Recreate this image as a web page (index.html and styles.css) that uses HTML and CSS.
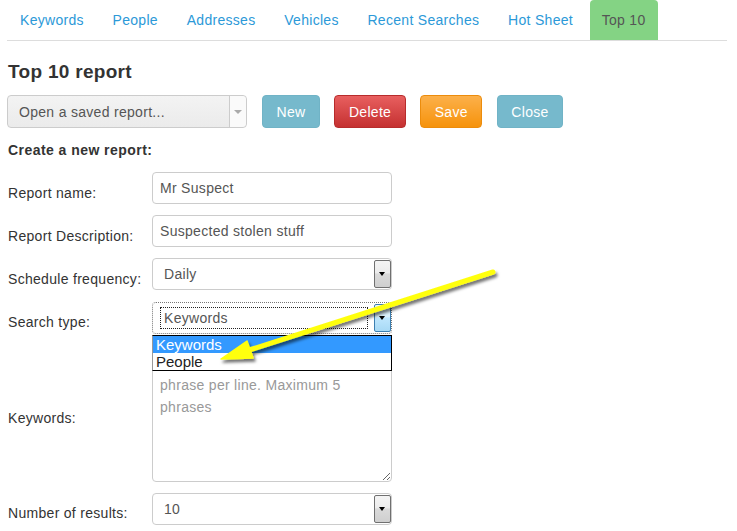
FILE: index.html
```html
<!DOCTYPE html>
<html lang="en">
  <head>
    <meta charset="UTF-8" />
    <meta name="viewport" content="width=device-width, initial-scale=1.0" />
    <title>Top 10 report</title>
    <link rel="stylesheet" href="styles.css">
  </head>
  <body>
    <div class="page">
      <ul class="tabs">
        <li class="tab"><a href="#">Keywords</a></li>
        <li class="tab"><a href="#">People</a></li>
        <li class="tab"><a href="#">Addresses</a></li>
        <li class="tab"><a href="#">Vehicles</a></li>
        <li class="tab"><a href="#">Recent Searches</a></li>
        <li class="tab"><a href="#">Hot Sheet</a></li>
        <li class="tab active"><a href="#">Top 10</a></li>
      </ul>

      <h1 class="title">Top 10 report</h1>

      <div class="toolbar">
        <div class="saved">
          <span class="saved-text">Open a saved report...</span>
          <span class="saved-arrow"></span>
        </div>
        <button class="btn btn-info first">New</button>
        <button class="btn btn-danger">Delete</button>
        <button class="btn btn-warning">Save</button>
        <button class="btn btn-info">Close</button>
      </div>

      <h2 class="section">Create a new report:</h2>

      <div class="form">
        <label class="label">Report name:</label>
        <input class="field" type="text" value="Mr Suspect" />

        <label class="label">Report Description:</label>
        <input class="field" type="text" value="Suspected stolen stuff" />

        <label class="label">Schedule frequency:</label>
        <div class="select">
          <span class="select-text">Daily</span>
          <span class="select-btn"></span>
        </div>

        <label class="label">Search type:</label>
        <div class="select focus">
          <span class="focus-text">Keywords</span>
          <span class="select-btn hover"></span>
          <!-- opened dropdown list -->
          <ul class="options">
            <li class="option selected">Keywords</li>
            <li class="option">People</li>
          </ul>
        </div>

        <label class="label">Keywords:</label>
        <textarea class="area" placeholder="Enter one keyword or&#10;phrase per line. Maximum 5&#10;phrases"></textarea>

        <label class="label">Number of results:</label>
        <div class="select">
          <span class="select-text">10</span>
          <span class="select-btn"></span>
        </div>
      </div>

      <!-- yellow annotation arrow drawn over the page -->
      <svg class="annotation" width="737" height="531" viewBox="0 0 737 531">
        <defs>
          <filter id="shadow" x="-10%" y="-30%" width="120%" height="160%">
            <feDropShadow dx="2" dy="3" stdDeviation="1.6" flood-color="#000" flood-opacity="0.55" />
          </filter>
        </defs>
        <g filter="url(#shadow)">
          <line x1="493" y1="272" x2="246" y2="351" stroke="#ffff10" stroke-width="5" stroke-linecap="round" />
          <polygon points="221,359 247,341 253,358" fill="#ffff10" stroke="#ffff10" stroke-width="1.5" stroke-linejoin="round" />
        </g>
      </svg>
    </div>
  </body>
</html>
```

FILE: styles.css
```css
* {
  box-sizing: border-box;
}
body {
  margin: 0;
  font-family: "Liberation Sans", Arial, sans-serif;
  font-size: 14px;
  letter-spacing: 0.3px;
  color: #333;
  background: #fff;
  overflow: hidden;
}
.page {
  position: relative;
  padding: 0 10px 0 7px;
}

/* tabs */
.tabs {
  list-style: none;
  margin: 0;
  padding: 0 0 0 1px;
  display: flex;
  width: 720px;
  border-bottom: 1px solid #ddd;
}
.tab a {
  display: block;
  padding: 0 12px;
  margin-right: 4.7px;
  line-height: 40px;
  color: #2c99d8;
  text-decoration: none;
  border-radius: 4px 4px 0 0;
}
.tab.active a {
  background: #84d384;
  color: #555;
}

.title {
  margin: 20px 0 0 1px;
  font-size: 19px;
  line-height: 22px;
  font-weight: bold;
  color: #333;
}

/* toolbar */
.toolbar {
  display: flex;
  margin-top: 12px;
  height: 33px;
}
.saved {
  display: flex;
  align-items: center;
  width: 240px;
  height: 33px;
  border: 1px solid #ccc;
  border-radius: 4px;
  background: linear-gradient(#f3f3f3, #ebebeb);
  color: #555;
}
.saved-text {
  padding-left: 11px;
}
.saved-arrow {
  position: relative;
  margin-left: auto;
  width: 17px;
  height: 31px;
  border-left: 1px solid #ccc;
  background: #fafafa;
  border-radius: 0 4px 4px 0;
}
.saved-arrow::after {
  content: "";
  position: absolute;
  left: 4px;
  top: 14px;
  border-left: 4px solid transparent;
  border-right: 4px solid transparent;
  border-top: 4px solid #aaa;
}
.btn {
  margin-left: 14.5px;
  padding: 0 13.5px;
  height: 33px;
  border: 1px solid transparent;
  border-radius: 4px;
  font-family: "Liberation Sans", Arial, sans-serif;
  font-size: 14px;
  letter-spacing: 0.3px;
  color: #fff;
}
.btn.first {
  margin-left: 15px;
}
.btn-info {
  background: #76b9cc;
  border-color: #70b3c6;
}
.btn-danger {
  background: linear-gradient(#e85f5f, #c53131);
  border-color: #b72c2c;
}
.btn-warning {
  background: linear-gradient(#fcb04a, #f6930c);
  border-color: #ec8c0c;
}

.section {
  margin: 13px 0 0 1px;
  font-size: 14px;
  line-height: 18px;
  font-weight: bold;
  letter-spacing: 0.45px;
}

/* form */
.form {
  display: grid;
  grid-template-columns: 145px 240px;
  row-gap: 11.2px;
  margin-top: 13px;
}
.label {
  align-self: center;
  padding: 9px 0 0 1px;
  line-height: 20px;
}
.field {
  height: 32px;
  border: 1px solid #ccc;
  border-radius: 4px;
  padding: 0 7px;
  font-family: "Liberation Sans", Arial, sans-serif;
  font-size: 14px;
  letter-spacing: 0.3px;
  color: #555;
}
.select {
  position: relative;
  display: flex;
  align-items: center;
  height: 32px;
  padding-left: 11px;
  border: 1px solid #ccc;
  border-radius: 4px;
  color: #555;
}
.select.focus {
  border: 1px dotted #777;
}
.focus-text {
  flex: 1;
  margin: 0 6px 0 -4px;
  padding: 0 3px;
  line-height: 20px;
  border: 1px dotted #222;
}
.select-btn {
  position: relative;
  margin-left: auto;
  width: 17px;
  height: 28px;
  border: 1px solid #707070;
  border-radius: 2px;
  background: linear-gradient(#f4f4f4 0, #ececec 45%, #dadada 50%, #cfcfcf 100%);
}
.select-btn.hover {
  border-color: #3c7fb1;
  background: linear-gradient(#eaf6fd 0, #d9f0fc 45%, #bee6fd 50%, #a7d9f5 100%);
}
.select-btn::after {
  content: "";
  position: absolute;
  left: 4px;
  top: 11px;
  border-left: 3.5px solid transparent;
  border-right: 3.5px solid transparent;
  border-top: 4px solid #000;
}
.options {
  position: absolute;
  left: -1px;
  top: 32px;
  width: 240px;
  margin: 0;
  padding: 0;
  list-style: none;
  background: #fff;
  border: 1px solid #000;
  border-left-color: #999;
  z-index: 2;
}
.option {
  height: 17px;
  line-height: 17px;
  padding-left: 3px;
  font-size: 15px;
  letter-spacing: 0;
  color: #222;
}
.option.selected {
  background: #3399ff;
  color: #fff;
}
.area {
  height: 137px;
  padding: 6px 7px;
  border: 1px solid #ccc;
  border-radius: 4px;
  font-family: "Liberation Sans", Arial, sans-serif;
  font-size: 14px;
  line-height: 22px;
  letter-spacing: 0.3px;
  color: #555;
}
.area::placeholder {
  color: #999;
}

.annotation {
  position: absolute;
  left: 0;
  top: 0;
  pointer-events: none;
  z-index: 3;
}
```
